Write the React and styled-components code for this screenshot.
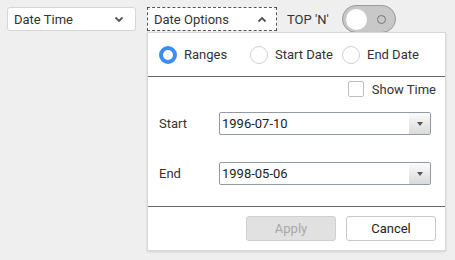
import styled, { createGlobalStyle } from "styled-components";

const GlobalStyle = createGlobalStyle`
  body {
    margin: 0;
    background: #efefef;
    font-family: Roboto, "Liberation Sans", sans-serif;
    font-size: 13px;
    color: #333;
  }
`;

const Page = styled.div`
  min-height: 100vh;
  box-sizing: border-box;
  padding: 7px;
`;

const Toolbar = styled.div`
  display: flex;
  align-items: center;
  height: 24px;
`;

const Select = styled.div`
  box-sizing: border-box;
  width: ${(p) => p.$width}px;
  height: 24px;
  display: flex;
  align-items: center;
  justify-content: space-between;
  padding: 0 ${(p) => p.$padRight}px 0 6px;
  background: #fff;
  border: 1px ${(p) => (p.$open ? "dashed #555" : "solid #d6d6d6")};
  border-radius: ${(p) => (p.$open ? 0 : 3)}px;
  margin-right: ${(p) => p.$gap}px;
`;

const DropWrap = styled.div`
  position: relative;
`;

const TopLabel = styled.span`
  margin-right: 13px;
`;

const Toggle = styled.div`
  box-sizing: border-box;
  width: 54px;
  height: 28px;
  border-radius: 14px;
  background: #c8c8c8;
  border: 1px solid #9a9a9a;
  display: flex;
  align-items: center;
  justify-content: space-between;
  padding: 0 9px 0 3px;
`;

const Knob = styled.div`
  width: 21px;
  height: 21px;
  border-radius: 50%;
  background: #fff;
`;

const OffMark = styled.div`
  box-sizing: border-box;
  width: 9px;
  height: 9px;
  border-radius: 50%;
  border: 1.5px solid #777;
`;

const Panel = styled.div`
  position: absolute;
  top: calc(100% + 1px);
  left: 0;
  z-index: 2;
  box-sizing: border-box;
  width: 299px;
  height: 219px;
  background: #fff;
  border: 1px solid #d8d8d8;
  box-shadow: 0 1px 2px rgba(0, 0, 0, 0.12);
  display: flex;
  flex-direction: column;
`;

const RadioRow = styled.div`
  height: 43px;
  flex: none;
  display: grid;
  grid-template-columns: 91px 92px 92px;
  align-items: center;
  padding-left: 11px;
  border-bottom: 1px solid #666;
`;

const RadioItem = styled.label`
  display: flex;
  align-items: center;
  gap: 7px;
`;

const RadioDot = styled.span`
  box-sizing: border-box;
  width: 18px;
  height: 18px;
  border-radius: 50%;
  background: #fff;
  border: ${(p) => (p.$on ? "4.5px solid #3b8ef0" : "1px solid #d0d0d0")};
`;

const Body = styled.div`
  flex: 1;
  padding: 4px 14px 0 11px;
  border-bottom: 1px solid #666;
`;

const ShowTime = styled.div`
  display: flex;
  justify-content: flex-end;
  align-items: center;
  gap: 8px;
  height: 16px;
  margin-right: -5px;
`;

const CheckBox = styled.span`
  box-sizing: border-box;
  width: 16px;
  height: 16px;
  border: 1px solid #bdbdbd;
  border-radius: 2px;
`;

const Field = styled.div`
  display: flex;
  align-items: center;
  margin-top: ${(p) => p.$top}px;
`;

const FieldLabel = styled.span`
  width: 60px;
`;

const DateBox = styled.div`
  box-sizing: border-box;
  width: 212px;
  height: 23px;
  display: flex;
  align-items: stretch;
  border: 1px solid #8f9aa5;
  border-radius: 2px;
  background: #fff;
`;

const DateValue = styled.span`
  flex: 1;
  display: flex;
  align-items: center;
  padding-left: 2px;
  color: #222;
`;

const ArrowBtn = styled.span`
  width: 21px;
  display: flex;
  align-items: center;
  justify-content: center;
  background: linear-gradient(#fbfbfb, #dadada);
  &::after {
    content: "";
    border-left: 3px solid transparent;
    border-right: 3px solid transparent;
    border-top: 4px solid #555;
  }
`;

const Footer = styled.div`
  height: 43px;
  flex: none;
  box-sizing: border-box;
  display: flex;
  justify-content: flex-end;
  align-items: flex-start;
  gap: 10px;
  padding: 9px 9px 0 0;
`;

const Button = styled.button`
  box-sizing: border-box;
  width: 90px;
  height: 25px;
  font-family: Roboto, "Liberation Sans", sans-serif;
  font-size: 13px;
  border-radius: 3px;
  border: 1px solid ${(p) => (p.disabled ? "#d0d0d0" : "#c8c8c8")};
  background: ${(p) => (p.disabled ? "#e1e1e1" : "#fff")};
  color: ${(p) => (p.disabled ? "#a8a8a8" : "#222")};
`;

const Chevron = ({ up }) => (
  <svg width="10" height="7" viewBox="0 0 10 7">
    <path
      d={up ? "M1.5 5.5 L5 2 L8.5 5.5" : "M1.5 1.5 L5 5 L8.5 1.5"}
      fill="none"
      stroke="#555"
      strokeWidth="1.8"
    />
  </svg>
);

function App() {
  return (
    <Page>
      <GlobalStyle />
      <Toolbar>
        <Select $width={129} $padRight={11} $gap={11}>
          Date Time
          <Chevron />
        </Select>
        <DropWrap>
          <Select $width={130} $padRight={9} $gap={10} $open>
            Date Options
            <Chevron up />
          </Select>
          <Panel>
            <RadioRow>
              <RadioItem>
                <RadioDot $on />
                Ranges
              </RadioItem>
              <RadioItem>
                <RadioDot />
                Start Date
              </RadioItem>
              <RadioItem>
                <RadioDot />
                End Date
              </RadioItem>
            </RadioRow>
            <Body>
              <ShowTime>
                <CheckBox />
                Show Time
              </ShowTime>
              <Field $top={15}>
                <FieldLabel>Start</FieldLabel>
                <DateBox>
                  <DateValue>1996-07-10</DateValue>
                  <ArrowBtn />
                </DateBox>
              </Field>
              <Field $top={27}>
                <FieldLabel>End</FieldLabel>
                <DateBox>
                  <DateValue>1998-05-06</DateValue>
                  <ArrowBtn />
                </DateBox>
              </Field>
            </Body>
            <Footer>
              <Button disabled>Apply</Button>
              <Button>Cancel</Button>
            </Footer>
          </Panel>
        </DropWrap>
        <TopLabel>TOP 'N'</TopLabel>
        <Toggle>
          <Knob />
          <OffMark />
        </Toggle>
      </Toolbar>
    </Page>
  );
}

export default App;
